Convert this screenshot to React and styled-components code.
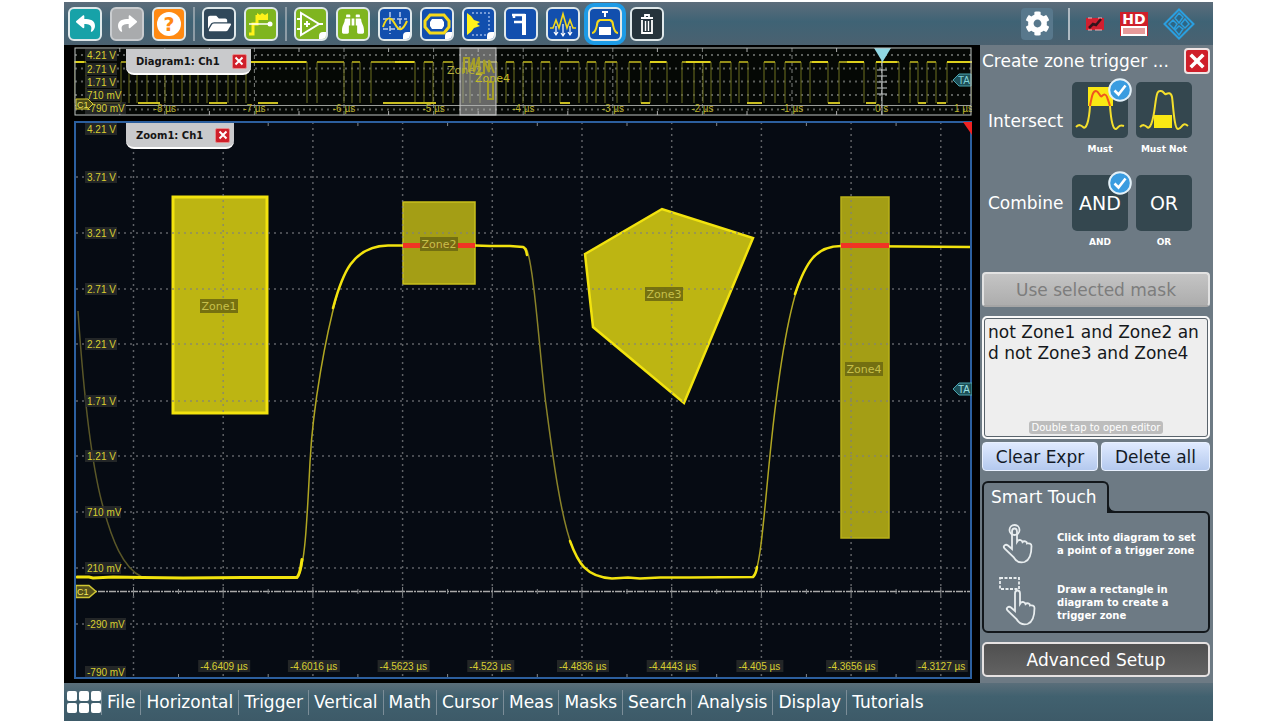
import React from 'react';
import styled, { createGlobalStyle, ThemeProvider, css } from 'styled-components';
import { FaReply, FaShare, FaFolderOpen, FaBinoculars, FaCog } from 'react-icons/fa';

const theme = {
  colors: {
    panel: '#6d7a84',
    tile: '#34474f',
    trace: '#f2e30e',
    frame: '#2c5f9e',
    plot: '#060b13',
    red: '#cf1f2a',
  },
  fontSize: {
    xs: '9px',
    s: '10px',
    m: '17px',
    l: '19px',
  },
};

const GlobalStyle = createGlobalStyle`
  * {
    box-sizing: border-box;
  }

  body {
    margin: 0;
    background: white;
    font-family: "DejaVu Sans", Verdana, sans-serif;
    font-size: 17px;
    color: white;
  }

  button, textarea {
    font: inherit;
    color: inherit;
    margin: 0;
    padding: 0;
  }

  svg {
    display: block;
  }
`;

const Page = styled.div`
  padding: 2px 67px 2px 64px;
`;

const Scope = styled.div`
  display: flex;
  flex-direction: column;
  background: black;
`;

const Toolbar = styled.header`
  display: flex;
  align-items: center;
  height: 43px;
  padding: 0 18px 0 4px;
  background: linear-gradient(#5c6d7b, #3f6375 45%, #4b6170);
`;

const ToolGroup = styled.div`
  display: flex;
  align-items: center;
  gap: 8px;

  & + & {
    margin-left: 7px;
    padding-left: 7px;
    border-left: 2px solid #8d9ca6;
  }
`;

const ToolButton = styled.button`
  position: relative;
  display: flex;
  align-items: center;
  justify-content: center;
  width: 34px;
  height: 34px;
  border: 2px solid ${(props) => props.$border || '#dfe8ea'};
  border-radius: 6px;
  background: ${(props) => props.$color};
  ${(props) => props.$active && css`
    box-shadow: 0 0 0 4px #1d9be6;
  `}
  ${(props) => props.$more && css`
    &::after {
      content: '';
      position: absolute;
      right: 0;
      bottom: 0;
      width: 7px;
      height: 7px;
      border-radius: 4px 0 4px 0;
      background: white;
    }
  `}
`;

const Help = styled.span`
  width: 24px;
  height: 24px;
  border-radius: 50%;
  background: white;
  color: #ff8a12;
  font-size: ${theme.fontSize.l};
  font-weight: bold;
  line-height: 24px;
`;

const Status = styled.div`
  display: flex;
  align-items: center;
  gap: 15px;
  margin-left: auto;
`;

const GearButton = styled.button`
  display: flex;
  align-items: center;
  justify-content: center;
  width: 32px;
  height: 32px;
  border: 0;
  border-radius: 4px;
  background: #58788c;
`;

const Divider = styled.span`
  width: 2px;
  height: 32px;
  background: #aebac2;
`;

const HdBadge = styled.span`
  display: flex;
  flex-direction: column;
  align-items: center;
  width: 28px;
  height: 24px;
  background: ${(props) => props.theme.colors.red};
  font-size: 14px;
  font-weight: bold;
  line-height: 14px;

  &::after {
    content: '';
    width: 22px;
    height: 7px;
    border: 2px solid white;
    background: #e79a9a;
  }
`;

const Workspace = styled.main`
  display: flex;
`;

const Plots = styled.section`
  flex: 1;
  min-width: 0;
  display: flex;
  flex-direction: column;
  gap: 5px;
  padding: 2px 8px 4px 10px;
`;

const PlotWindow = styled.div`
  position: relative;

  > svg {
    width: 100%;
    height: auto;
  }
`;

const PlotTab = styled.div`
  position: absolute;
  top: 2px;
  left: 52px;
  display: flex;
  align-items: center;
  gap: 12px;
  height: 26px;
  padding: 0 4px 0 10px;
  border-bottom: 2px solid white;
  border-radius: 0 0 8px 8px;
  background: #c9cacc;
  color: #151515;
  font-size: ${theme.fontSize.s};
  font-weight: bold;
`;

const CloseButton = styled.button`
  display: flex;
  align-items: center;
  justify-content: center;
  width: ${(props) => (props.$large ? 26 : 15)}px;
  height: ${(props) => (props.$large ? 26 : 15)}px;
  border: ${(props) => (props.$large ? '2px solid #f0e4e4' : '1px solid #e58b8b')};
  border-radius: ${(props) => (props.$large ? 4 : 2)}px;
  background: ${(props) => props.theme.colors.red};
`;

const Panel = styled.aside`
  display: flex;
  flex-direction: column;
  width: 233px;
  padding: 3px 3px 4px 2px;
  background: ${(props) => props.theme.colors.panel};
`;

const PanelHeader = styled.div`
  display: flex;
  align-items: center;
  justify-content: space-between;
`;

const PanelTitle = styled.h1`
  margin: 0;
  font-size: ${theme.fontSize.m};
  font-weight: normal;
  line-height: 26px;
  white-space: nowrap;
`;

const OptionRow = styled.div`
  display: grid;
  grid-template-columns: 76px 56px 56px;
  column-gap: 8px;
  justify-items: center;
  margin-top: ${(props) => props.$top}px;
  padding-left: 6px;
`;

const OptionLabel = styled.span`
  justify-self: start;
  line-height: 56px;
  padding-top: ${(props) => props.$top || 0}px;
`;

const Option = styled.label`
  display: flex;
  flex-direction: column;
  align-items: center;
  gap: 6px;
  font-size: ${theme.fontSize.xs};
  font-weight: bold;
  line-height: 11px;
  white-space: nowrap;
`;

const Tile = styled.button`
  position: relative;
  display: flex;
  align-items: center;
  justify-content: center;
  width: 56px;
  height: 56px;
  border: 0;
  border-radius: 5px;
  background: ${(props) => props.theme.colors.tile};
  font-size: ${theme.fontSize.l};
  font-weight: normal;
`;

const Badge = styled.span`
  position: absolute;
  top: -4px;
  right: -4px;
  width: 24px;
  height: 24px;
`;

const MaskButton = styled.button`
  height: 35px;
  margin-top: 24px;
  border: 2px solid #e2e2e2;
  border-bottom-color: #a5a5a5;
  border-radius: 4px;
  background: linear-gradient(#c4c4c4, #adadad);
  color: #7d7d7d;
`;

const Editor = styled.div`
  position: relative;
  display: flex;
  margin-top: 9px;
`;

const Expression = styled.textarea`
  flex: 1;
  width: 100%;
  height: 123px;
  padding: 4px;
  border: 2px solid #fafafa;
  border-radius: 5px;
  outline: 1px solid #59636b;
  outline-offset: -3px;
  background: #eeeeee;
  color: #15181b;
  line-height: 21px;
  word-break: break-all;
  resize: none;
  overflow: hidden;
`;

const EditorHint = styled.span`
  position: absolute;
  right: 0;
  bottom: 5px;
  left: 0;
  width: 134px;
  margin: 0 auto;
  border-radius: 3px;
  background: #bdbdbd;
  font-size: ${theme.fontSize.s};
  line-height: 13px;
  text-align: center;
  white-space: nowrap;
`;

const ButtonPair = styled.div`
  display: grid;
  grid-template-columns: 116px 1fr;
  gap: 3px;
  margin-top: 3px;
`;

const BlueButton = styled.button`
  height: 29px;
  border: 1px solid #e9f1ff;
  border-radius: 4px;
  background: linear-gradient(#dfeaff, #b4c9ee);
  color: #131a26;
  white-space: nowrap;
`;

const TouchTab = styled.h2`
  position: relative;
  z-index: 1;
  align-self: flex-start;
  width: 127px;
  height: 32px;
  margin: 10px 0 -2px;
  padding-left: 7px;
  border: 2px solid #12171b;
  border-bottom: 0;
  border-radius: 6px 6px 0 0;
  background: ${(props) => props.theme.colors.panel};
  font-size: ${theme.fontSize.m};
  font-weight: normal;
  line-height: 28px;
  white-space: nowrap;

  &::after {
    content: '';
    position: absolute;
    bottom: 0;
    left: 100%;
    width: 8px;
    height: 8px;
    border-bottom: 2px solid #12171b;
    border-left: 2px solid #12171b;
    border-bottom-left-radius: 8px;
    background: ${(props) => props.theme.colors.panel};
  }
`;

const TouchBody = styled.div`
  display: flex;
  flex-direction: column;
  gap: 8px;
  height: 122px;
  padding: 7px 0 0 10px;
  border: 2px solid #12171b;
  border-radius: 0 6px 6px 6px;
`;

const TouchHint = styled.p`
  display: grid;
  grid-template-columns: 50px 1fr;
  column-gap: 13px;
  align-items: center;
  margin: 0;
  font-size: ${theme.fontSize.s};
  font-weight: bold;
  line-height: 13px;
`;

const HintText = styled.span`
  width: ${(props) => props.$width}px;
`;

const AdvancedButton = styled.button`
  height: 35px;
  margin-top: 9px;
  border: 2px solid #e6e2e2;
  border-radius: 5px;
  background: linear-gradient(#505050, #626262);
`;

const MenuBar = styled.nav`
  display: flex;
  align-items: center;
  height: 38px;
  padding-left: 3px;
  background: linear-gradient(#5a6e7a, #41616f 35%, #3d5a68);
`;

const AppsButton = styled.button`
  display: grid;
  grid-template-columns: repeat(3, 10px);
  grid-auto-rows: 10px;
  gap: 2px;
  padding: 0;
  border: 0;
  background: none;

  span {
    border-radius: 2px;
    background: white;
  }
`;

const MenuLink = styled.a`
  padding: 0 5px;
  border-left: 1px solid #7b8d98;
  color: white;
  line-height: 25px;
  text-decoration: none;
  white-space: nowrap;
`;

const menu = ['File', 'Horizontal', 'Trigger', 'Vertical', 'Math', 'Cursor', 'Meas', 'Masks', 'Search', 'Analysis', 'Display', 'Tutorials'];

const voltLabels = [
  ['4.21 V', 129], ['3.71 V', 177], ['3.21 V', 233], ['2.71 V', 289], ['2.21 V', 344], ['1.71 V', 401],
  ['1.21 V', 456], ['710 mV', 512], ['210 mV', 568], ['-290 mV', 624], ['-790 mV', 672],
];

const timeLabels = ['-4.6409 µs', '-4.6016 µs', '-4.5623 µs', '-4.523 µs', '-4.4836 µs', '-4.4443 µs', '-4.405 µs', '-4.3656 µs', '-4.3127 µs'];

const overviewVolts = [['4.21 V', 55], ['2.71 V', 69], ['1.71 V', 82], ['710 mV', 95], ['-790 mV', 108]];

const gridX = [0, 1, 2, 3, 4, 5, 6, 7, 8, 9].map((n) => 133.5 + n * 89.7);
const overviewX = [0, 1, 2, 3, 4, 5, 6, 7, 8].map((n) => 164.8 + n * 89.6);

// high pulses of the serial pattern, [start, end]
const pulses = [
  [74, 86], [121, 129], [137, 147], [157, 165], [173, 182], [190, 198], [207, 217], [228, 236], [246, 307],
  [317, 344], [352, 360], [371, 415], [424, 433], [443, 453], [463, 470], [480, 497], [506, 514], [523, 532],
  [541, 550], [560, 579], [587, 596], [605, 617], [629, 641], [650, 667], [682, 694], [703, 711], [720, 731],
  [739, 748], [764, 775], [785, 801], [810, 828], [839, 864], [876, 899], [910, 918], [927, 936], [947, 972],
];
const pulsePath = pulses.map(([a, b]) => `M${a} 103V62H${b}V103`).join('');

function Cross({ size }) {
  return (
    <svg width={size} height={size} viewBox="0 0 10 10">
      <path d="M1.5 1.5 8.5 8.5M8.5 1.5 1.5 8.5" stroke="white" strokeWidth="2" fill="none" />
    </svg>
  );
}

function Check() {
  return (
    <Badge>
      <svg width="24" height="24" viewBox="0 0 24 24">
        <circle cx="12" cy="12" r="10.8" fill="#3a9ce0" stroke="#e4f1f8" strokeWidth="2" />
        <path d="m6.5 12.5 4 4 7-9" stroke="white" strokeWidth="2.6" fill="none" />
      </svg>
    </Badge>
  );
}

function ToolIcon({ children }) {
  return (
    <svg width="30" height="30" viewBox="0 0 30 30" fill="none" stroke="white" strokeWidth="2">
      {children}
    </svg>
  );
}

function AxisLabel({ x, y, children }) {
  const width = children.length * 5 + (children.includes('m') ? 6 : 2);
  return (
    <g>
      <rect x={x - 2} y={y - 6} width={width} height="12" fill="#292b2c" opacity="0.85" />
      <text x={x} y={y + 4} fontFamily="Liberation Sans, Arial, sans-serif" fontSize="10" fill="#d9cf31">{children}</text>
    </g>
  );
}

function ZoneLabel({ x, y, children }) {
  return (
    <g>
      <rect x={x - 19} y={y - 7} width="38" height="14" fill="#6e6911" opacity="0.9" />
      <text x={x} y={y + 4} textAnchor="middle" fontFamily="DejaVu Sans, sans-serif" fontSize="11" fill="#c7c04a">{children}</text>
    </g>
  );
}

function OverviewPlot() {
  return (
    <svg viewBox="74 47 898 69" role="img" aria-label="Diagram 1 waveform">
      <rect x="74" y="47" width="898" height="69" fill="#050805" />
      <path d="M75 55H971M75 68.500H971M75 81.500H971M75 95H971M75 109.500H971" stroke="#5c5f5c" strokeWidth="2" strokeDasharray="2 4" />
      <path d={overviewX.map((x) => `M${x} 48V115`).join('')} stroke="#7c7f7c" strokeDasharray="4 3" />
      <path d={overviewX.map((x) => `M${x - 45} 48v4M${x - 45} 111v4`).join('')} stroke="#aaa" />
      <path d={pulsePath} fill="none" stroke="#6f7020" strokeWidth="1" />
      <path d={pulses.map(([a, b]) => `M${a} 62H${b}`).join('')} stroke="#b3a91c" strokeWidth="1.5" />
      <path d="M87 103H121M138 103h22M209 103h18M258 103h20M383 103h37M416 103h20M560 103h10M641 103h9M747 103h15M828 103h12M866 103h10M918 103h8M937 103h9" stroke="#c9bd20" strokeWidth="2" />
      <path d="M246 62h60M395 62h19M650 62h16M686 62h24M812 62h16M847 62h17M876 62h21M947 62h25M75 62h9" stroke="#ddd01c" strokeWidth="2" />
      <path d="M75 105.500H971" stroke="#9a9d99" />
      <rect x="460" y="48" width="36" height="67" fill="#b7b7b7" fillOpacity="0.55" stroke="#c9c9c9" />
      <path d="M464 73V58h5v14l5-14v14l5-15v16h5V60l5 12V60l5 13M488 82v17h5V82z" stroke="#a59f28" strokeWidth="2" fill="none" />
      <text x="447" y="74" fontFamily="DejaVu Sans, sans-serif" fontSize="11" fill="#b5ae3c">Zone2</text>
      <text x="475" y="82" fontFamily="DejaVu Sans, sans-serif" fontSize="11" fill="#c5bb26">Zone4</text>
      {overviewVolts.map(([label, y]) => <AxisLabel key={label} x={87} y={y}>{label}</AxisLabel>)}
      {overviewX.map((x, i) => (
        <text key={x} x={x} y="112" textAnchor="middle" fontFamily="Liberation Sans, sans-serif" fontSize="10" fill="#b9b02b">
          {i === 8 ? '0 s' : `${i - 8} µs`}
        </text>
      ))}
      <text x="954" y="112" fontFamily="Liberation Sans, sans-serif" fontSize="10" fill="#b9b02b">1 µs</text>
      <path d="M76 99h12l5 5-5 5H76z" stroke="#d9cf31" fill="#4d4b18" />
      <text x="77" y="108" fontFamily="Liberation Sans, sans-serif" fontSize="9" fill="#ece25a">C1</text>
      <path d="M882 60V115M877 70h10M877 76h10M877 82h10M877 88h10M877 94h10" stroke="#c3c7c7" />
      <path d="M874 48h17l-8.500 14z" fill="#8fd8e4" />
      <path d="M953 80l6-6h12v12h-12z" fill="#1d4f57" stroke="#4ba3ad" />
      <text x="958" y="84" fontFamily="Liberation Sans, sans-serif" fontSize="10" fill="#7fd0d6">TA</text>
      <rect x="75" y="48" width="896" height="67" fill="none" stroke="#bcbfc0" />
    </svg>
  );
}

function ZoomPlot() {
  return (
    <svg viewBox="74 121 898 558" role="img" aria-label="Zoomed waveform with trigger zones">
      <rect x="74" y="121" width="898" height="558" fill={theme.colors.plot} />
      <rect x="173" y="197" width="94" height="216" fill="#bdb512" stroke={theme.colors.trace} strokeWidth="3" />
      <rect x="403" y="202" width="72" height="82" fill="#a49e15" stroke="#c9c01c" strokeWidth="1.5" />
      <path d="M585 254 662 209 753 238 684 403 593 327z" fill="#bdb512" stroke={theme.colors.trace} strokeWidth="2.500" />
      <rect x="841" y="197" width="48" height="341" fill="#a49e15" stroke="#b9b11a" strokeWidth="1.5" />
      <g stroke="#7d7f82" strokeWidth="1.5" strokeDasharray="2 4" opacity="0.75">
        <path d={gridX.map((x) => `M${x} 122V677`).join('')} />
        <path d={voltLabels.slice(1, 10).map(([, y]) => `M76 ${y}H971`).join('')} />
      </g>
      <path d="M76 591.500H971" stroke="#a9a9a9" strokeWidth="1.5" strokeDasharray="7 1 2 1" />
      <path d={gridX.map((x) => `M${x} 587v9M${x + 45} 589v5M${x + 45} 122v4M${x + 45} 674v4`).join('')} stroke="#85888a" />
      <g fill="none" stroke="#756f26" strokeWidth="1.5">
        <path d="M78 311C84 400 92 465 102 503S123 568 142 577" stroke="#5a5728" />
        <path d="M298 577C305 566 307 520 310 462S326 335 337 295" stroke="#b0a622" />
        <path d="M526 248C534 262 540 360 546 405S560 515 572 546" stroke="#8a8329" />
        <path d="M754 577C761 562 764 515 770 455S786 320 799 283" stroke="#b0a622" />
      </g>
      <g fill="none" stroke={theme.colors.trace} strokeWidth="3" strokeLinecap="round">
        <path d="M77 577h12l4 1 20-1 30 .5 40 .5 60-.5 54 0q3-3 5-18" />
        <path d="M333 308C342 275 352 246 388 245.500h15M475 245.500l15 .5h20l13 1q3 1 4 8" strokeWidth="2.500" />
        <path d="M570 541C578 563 586 577 612 578.500l16-1 12 1 20-1h30l63-.5q3-3 4-10" strokeWidth="2.500" />
        <path d="M795 294C806 262 816 246 841 246l129 1" strokeWidth="2.500" />
      </g>
      <path d="M403 245.500h72M841 245.500h48" stroke="#f03424" strokeWidth="5" />
      <ZoneLabel x={219} y={306}>Zone1</ZoneLabel>
      <ZoneLabel x={439} y={244}>Zone2</ZoneLabel>
      <ZoneLabel x={664} y={294}>Zone3</ZoneLabel>
      <ZoneLabel x={864} y={369}>Zone4</ZoneLabel>
      {voltLabels.map(([label, y]) => <AxisLabel key={label} x={87} y={y}>{label}</AxisLabel>)}
      {timeLabels.map((label, i) => <AxisLabel key={label} x={gridX[i + 1] - 23} y={666}>{label}</AxisLabel>)}
      <path d="M76 585.500h13l7 6-7 6H76z" fill="#55511b" stroke="#cfc632" strokeWidth="1.5" />
      <text x="77" y="595" fontFamily="Liberation Sans, sans-serif" fontSize="9" fill="#f2e85a">C1</text>
      <rect x="75" y="122" width="896" height="556" fill="none" stroke={theme.colors.frame} strokeWidth="2" />
      <path d="M963 122h9v13z" fill="#ee2222" />
      <path d="M953 389l6-6h13v12h-13z" fill="#1d4f57" stroke="#4ba3ad" />
      <text x="958" y="393" fontFamily="Liberation Sans, sans-serif" fontSize="10" fill="#9be0e4">TA</text>
    </svg>
  );
}

function TopBar() {
  return (
    <Toolbar>
      <ToolGroup>
        <ToolButton $color="#17a2a8" aria-label="Undo"><FaReply size={19} /></ToolButton>
        <ToolButton $color="#a9abad" $border="#c9cccf" aria-label="Redo"><FaShare size={19} /></ToolButton>
        <ToolButton $color="#ff8a12" aria-label="Help"><Help>?</Help></ToolButton>
      </ToolGroup>
      <ToolGroup>
        <ToolButton $color="#30485a" aria-label="Open"><FaFolderOpen size={23} /></ToolButton>
        <ToolButton $color="#7fb51f" aria-label="Auto set">
          <ToolIcon>
            <path d="M3 25h4V15h4V6" stroke="#fff21a" strokeWidth="3" />
            <path d="M11 4l3 2 2-2 3 2 3-2v7H11z" fill="#fff21a" stroke="none" />
            <path d="M3 15h21" strokeWidth="1.500" />
            <circle cx="24" cy="15" r="2.500" fill="white" stroke="none" />
          </ToolIcon>
        </ToolButton>
      </ToolGroup>
      <ToolGroup>
        <ToolButton $color="#7fb51f" $more aria-label="Math">
          <ToolIcon>
            <path d="M5 4v22l18-11zM1 10h4M1 20h4M23 15h4M8 15h6M11 12v6" />
          </ToolIcon>
        </ToolButton>
        <ToolButton $color="#7fb51f" aria-label="Search"><FaBinoculars size={22} /></ToolButton>
        <ToolButton $color="#124fae" $more aria-label="Cursor">
          <ToolIcon>
            <path d="M10 3v22M20 3v18M3 10h24M3 20h20" stroke="#b9cdef" strokeWidth="1.500" strokeDasharray="5 2" />
            <path d="M3 18c4-12 8-10 12-3s7 8 12-3" stroke="#f4d91b" />
          </ToolIcon>
        </ToolButton>
        <ToolButton $color="#124fae" $more aria-label="Mask">
          <ToolIcon>
            <path d="M8 6h14l5 6v6l-5 6H8l-5-6v-6z" stroke="#f4d91b" strokeWidth="3" />
            <path d="M10 10h10l2 3v4l-2 3H10l-2-3v-4z" fill="white" stroke="none" />
          </ToolIcon>
        </ToolButton>
        <ToolButton $color="#124fae" $more aria-label="Histogram">
          <ToolIcon>
            <path d="M3 4l4 3 3 4 6 2-3 2 3 2-6 2-3 4-4 3z" fill="#fff21a" stroke="none" />
            <path d="M8 4h17v17M8 26h14" strokeWidth="1.500" strokeDasharray="2 2" stroke="#95b4e6" />
          </ToolIcon>
        </ToolButton>
        <ToolButton $color="#124fae" aria-label="Measure">
          <ToolIcon>
            <path d="M6 6h13M8 13h10M8 6v3" strokeWidth="2.500" />
            <path d="M18 5v21" strokeWidth="4" />
          </ToolIcon>
        </ToolButton>
        <ToolButton $color="#124fae" aria-label="Spectrum">
          <ToolIcon>
            <path d="M2 19h3l3-8 3 8 4-14 4 14 3-8 3 8h3" stroke="#f4d91b" strokeWidth="1.600" />
            <path d="M8 17v8M15 15v11M22 17v8M6 23l2 3 2-3M13 24l2 3 2-3M20 23l2 3 2-3" strokeWidth="1.200" />
          </ToolIcon>
        </ToolButton>
        <ToolButton $color="#124fae" $active aria-label="Zone trigger">
          <ToolIcon>
            <path d="M2 24c3 0 4-3 5-8q0-4 3-5h10q3 1 3 5c1 5 2 8 5 8" stroke="#f4d91b" />
            <path d="M9 18h12v8H9z" fill="white" stroke="none" />
            <path d="M12 3h6M15 3v5" />
          </ToolIcon>
        </ToolButton>
        <ToolButton $color="#26343c" aria-label="Delete">
          <ToolIcon>
            <path d="M9 9h12M10 11v13h10V11M13 9V6h4v3" strokeWidth="1.800" />
            <path d="M13.500 12v10M16.500 12v10" strokeWidth="1.400" />
          </ToolIcon>
        </ToolButton>
      </ToolGroup>
      <Status>
        <GearButton aria-label="Settings"><FaCog size={25} /></GearButton>
        <Divider />
        <svg width="20" height="14" viewBox="0 0 20 14">
          <path d="M1 1h18v12H1z" fill="#d11f2f" />
          <path d="M3 1h4M13 1h4M3 13h4M10 13h7" stroke="#efb4b8" strokeWidth="1" />
          <path d="m4 11 4-4 3 1 5-6" stroke="#33141c" strokeWidth="2.500" fill="none" />
        </svg>
        <HdBadge>HD</HdBadge>
        <svg width="32" height="32" viewBox="0 0 32 32" fill="none" stroke="#2a9fe0" strokeWidth="2">
          <path d="M16 1.500 30.500 16 16 30.500 1.500 16z" />
          <path d="M16 5l4 4-4 6-4-5zM10 12l4 4-3 5-5-5zM22 11l4 5-4 4-4-4zM16 18l4 3-4 6-4-5z" strokeWidth="1.500" fill="#2c6686" />
        </svg>
      </Status>
    </Toolbar>
  );
}

function HandPath() {
  return (
    <path d="M15 27V9.500c0-4 5-4 5 0V20l1-1.500c1.500-1 4-.5 4.500 1.500 1.500-1.500 4.500-.5 4.500 1.500 2-.5 4.500 0 4.500 2.500 0 7-1 14-7 16-6 1.500-9-1.500-11-5l-9-8.500c-2-2.500 1-5 3.500-3z" />
  );
}

function TriggerPanel() {
  return (
    <Panel>
      <PanelHeader>
        <PanelTitle>Create zone trigger ...</PanelTitle>
        <CloseButton $large aria-label="Close panel"><Cross size={18} /></CloseButton>
      </PanelHeader>
      <OptionRow $top={8}>
        <OptionLabel $top={11}>Intersect</OptionLabel>
        <Option>
          <Tile aria-pressed="true">
            <svg width="52" height="52" viewBox="0 0 52 52" fill="none" strokeWidth="2">
              <path d="M14 3h25v19H14z" fill="#f9e814" />
              <path d="M2 43c3-3 5-2 7 0 3 3 6-5 7-21M36 22c1 14 3 24 6 23s2-5 8-3" stroke="#f4df2d" />
              <path d="M16 22c2-11 3-15 6-15s4 7 6 5 4-2 5 1 2 5 3 9" stroke="#f0561d" />
            </svg>
            <Check />
          </Tile>
          Must
        </Option>
        <Option>
          <Tile aria-pressed="false">
            <svg width="52" height="52" viewBox="0 0 52 52" fill="none" strokeWidth="2">
              <path d="M16 31h18v13H16z" fill="#f9e814" />
              <path d="M2 43c3-3 5-2 7 0 3 3 6-5 8-21s3-15 6-15 3 4 5 3 5-2 6 3 2 32 6 32 4-8 10-3" stroke="#f4df2d" />
            </svg>
          </Tile>
          Must Not
        </Option>
      </OptionRow>
      <OptionRow $top={20}>
        <OptionLabel>Combine</OptionLabel>
        <Option>
          <Tile aria-pressed="true">AND<Check /></Tile>
          AND
        </Option>
        <Option>
          <Tile aria-pressed="false">OR</Tile>
          OR
        </Option>
      </OptionRow>
      <MaskButton disabled>Use selected mask</MaskButton>
      <Editor>
        <Expression aria-label="Zone expression" readOnly value="not Zone1 and Zone2 and not Zone3 and Zone4" />
        <EditorHint>Double tap to open editor</EditorHint>
      </Editor>
      <ButtonPair>
        <BlueButton>Clear Expr</BlueButton>
        <BlueButton>Delete all</BlueButton>
      </ButtonPair>
      <TouchTab>Smart Touch</TouchTab>
      <TouchBody>
        <TouchHint>
          <svg width="50" height="48" viewBox="0 0 50 48" fill="none" stroke="#e8edef" strokeWidth="1.800">
            <g transform="translate(3 2)">
              <circle cx="17.500" cy="8" r="5" />
              <HandPath />
            </g>
          </svg>
          <HintText $width={146}>Click into diagram to set a point of a trigger zone</HintText>
        </TouchHint>
        <TouchHint>
          <svg width="50" height="52" viewBox="0 0 50 52" fill="none" stroke="#e8edef" strokeWidth="1.800">
            <path d="M6 2h19v11H6z" strokeDasharray="3 1.500" />
            <g transform="translate(6 8)"><HandPath /></g>
          </svg>
          <HintText $width={130}>Draw a rectangle in diagram to create a trigger zone</HintText>
        </TouchHint>
      </TouchBody>
      <AdvancedButton>Advanced Setup</AdvancedButton>
    </Panel>
  );
}

export default function App() {
  return (
    <ThemeProvider theme={theme}>
      <GlobalStyle />
      <Page>
        <Scope>
          <TopBar />
          <Workspace>
            <Plots>
              <PlotWindow>
                <OverviewPlot />
                <PlotTab>
                  Diagram1: Ch1
                  <CloseButton aria-label="Close Diagram1"><Cross size={10} /></CloseButton>
                </PlotTab>
              </PlotWindow>
              <PlotWindow>
                <ZoomPlot />
                <PlotTab>
                  Zoom1: Ch1
                  <CloseButton aria-label="Close Zoom1"><Cross size={10} /></CloseButton>
                </PlotTab>
              </PlotWindow>
            </Plots>
            <TriggerPanel />
          </Workspace>
          <MenuBar>
            <AppsButton aria-label="Apps">
              <span /><span /><span /><span /><span /><span />
            </AppsButton>
            {menu.map((item) => <MenuLink key={item} href="#">{item}</MenuLink>)}
          </MenuBar>
        </Scope>
      </Page>
    </ThemeProvider>
  );
}
